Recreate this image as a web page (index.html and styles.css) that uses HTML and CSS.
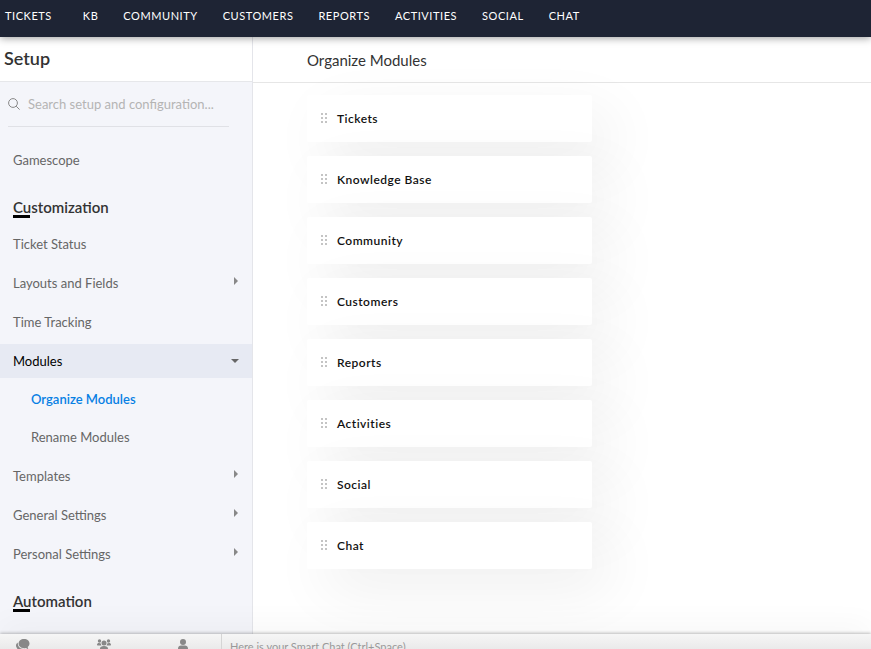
FILE: index.html
```html
<!DOCTYPE html>
<html lang="en">

<head>
    <meta charset="UTF-8">
    <meta name="viewport" content="width=device-width, initial-scale=1.0">
    <title>Setup</title>
    <link rel="stylesheet" href="styles.css">
</head>

<body>
    <!-- icons used more than once -->
    <svg class="defs" width="0" height="0">
        <symbol id="grip" viewBox="0 0 6 10">
            <path d="M0 0h2v2H0zM4 0h2v2H4zM0 4h2v2H0zM4 4h2v2H4zM0 8h2v2H0zM4 8h2v2H4z" />
        </symbol>
        <symbol id="arrow" viewBox="0 0 4 8">
            <path d="M0 0l4 4-4 4z" />
        </symbol>
    </svg>

    <nav class="topbar">
        <a class="first" href="#">TICKETS</a>
        <a href="#">KB</a>
        <a href="#">COMMUNITY</a>
        <a href="#">CUSTOMERS</a>
        <a href="#">REPORTS</a>
        <a href="#">ACTIVITIES</a>
        <a href="#">SOCIAL</a>
        <a href="#">CHAT</a>
    </nav>

    <div class="page">
        <!-- sidebar -->
        <aside class="sidebar">
            <h1>Setup</h1>
            <div class="menu_wrap">
                <label class="search">
                    <svg width="12" height="12" viewBox="0 0 12 12">
                        <circle cx="5" cy="5" r="4.4" />
                        <path d="M8.2 8.2l3.4 3.4" />
                    </svg>
                    <input type="text" aria-label="Search setup" placeholder="Search setup and configuration...">
                </label>
                <a class="item portal" href="#">Gamescope</a>

                <h2>Customization</h2>
                <ul class="menu">
                    <li><a class="item" href="#">Ticket Status</a></li>
                    <li><a class="item" href="#">Layouts and Fields <svg class="arrow"><use href="#arrow" /></svg></a></li>
                    <li><a class="item" href="#">Time Tracking</a></li>
                    <li>
                        <a class="item open" href="#">Modules
                            <svg class="arrow_down" viewBox="0 0 8 4"><path d="M0 0h8l-4 4z" /></svg>
                        </a>
                        <ul class="submenu">
                            <li><a class="item active" href="#">Organize Modules</a></li>
                            <li><a class="item" href="#">Rename Modules</a></li>
                        </ul>
                    </li>
                    <li><a class="item" href="#">Templates <svg class="arrow"><use href="#arrow" /></svg></a></li>
                    <li><a class="item" href="#">General Settings <svg class="arrow"><use href="#arrow" /></svg></a></li>
                    <li><a class="item" href="#">Personal Settings <svg class="arrow"><use href="#arrow" /></svg></a></li>
                </ul>

                <h2>Automation</h2>
            </div>
        </aside>

        <!-- content -->
        <main class="content">
            <h2 class="title">Organize Modules</h2>
            <ul class="modules">
                <li><svg class="grip"><use href="#grip" /></svg>Tickets</li>
                <li><svg class="grip"><use href="#grip" /></svg>Knowledge Base</li>
                <li><svg class="grip"><use href="#grip" /></svg>Community</li>
                <li><svg class="grip"><use href="#grip" /></svg>Customers</li>
                <li><svg class="grip"><use href="#grip" /></svg>Reports</li>
                <li><svg class="grip"><use href="#grip" /></svg>Activities</li>
                <li><svg class="grip"><use href="#grip" /></svg>Social</li>
                <li><svg class="grip"><use href="#grip" /></svg>Chat</li>
            </ul>
        </main>
    </div>

    <!-- chat bar -->
    <footer class="chatbar">
        <div class="chat_tabs">
            <button type="button" aria-label="Chats">
                <svg width="14" height="12" viewBox="0 0 14 12">
                    <path d="M8 0c3.3 0 5.500 2 5.500 4.600 0 1.500-.7 2.700-1.800 3.500l.6 2.100-2.400-1.200C6 9.800 2.600 8 2.600 4.600 2.600 2 4.800 0 8 0z" />
                    <path d="M1.800 3.500C.7 4.300 0 5.300 0 6.600c0 1.100.5 2 1.300 2.700L.8 11.500l2.500-1.200c1.400.3 2.800.2 3.900-.3C4 9.700 1.600 7.500 1.800 3.500z" />
                </svg>
            </button>
            <button type="button" aria-label="Channels">
                <svg width="14" height="12" viewBox="0 0 14 12">
                    <circle cx="2.5" cy="2" r="1.7" />
                    <circle cx="11.5" cy="2" r="1.7" />
                    <circle cx="7" cy="4" r="2.5" />
                    <path d="M0 6c0-1.500.8-2 2-2 .8 0 1.500.3 2 .8C4 5.500 4 6 4.400 6.600H.5zM14 6c0-1.500-.8-2-2-2-.8 0-1.500.3-2 .8 0 .7 0 1.200-.4 1.800h3.900zM2.800 11c0-2.700 1.200-3.900 4.200-3.900s4.200 1.200 4.200 3.900z" />
                </svg>
            </button>
            <button type="button" aria-label="Contacts">
                <svg width="12" height="12" viewBox="0 0 12 12">
                    <circle cx="6" cy="3" r="3" />
                    <path d="M1 12V9.500C1 7.500 2.500 6.500 4 6.500h4c1.500 0 3 1 3 3V12z" />
                </svg>
            </button>
        </div>
        <input type="text" aria-label="Smart Chat" placeholder="Here is your Smart Chat (Ctrl+Space)">
    </footer>
</body>

</html>
```
FILE: styles.css
```css
* {
    box-sizing: border-box;
}

body {
    margin: 0;
    height: 100vh;
    display: flex;
    flex-direction: column;
    overflow: hidden;
    font-family: Lato, "Liberation Sans", sans-serif;
    font-size: 13px;
    color: #666;
    background: #fff;
}

a {
    color: inherit;
    text-decoration: none;
}

ul {
    list-style: none;
    margin: 0;
    padding: 0;
}

h1,
h2 {
    margin: 0;
    color: #333;
}

input,
button {
    border: 0;
    padding: 0;
    background: none;
    font-family: inherit;
}

.defs {
    position: absolute;
}

/* top navigation */
.topbar {
    flex: none;
    display: flex;
    gap: 25px;
    height: 37px;
    padding: 0 5px;
    line-height: 32px;
    font-size: 11px;
    letter-spacing: 0.05em;
    color: #fff;
    background: #1e2434;
    box-shadow: 0 1px 8px rgba(0, 0, 0, 0.4);
    z-index: 1;
}

.topbar .first {
    margin-right: 6px;
}

.page {
    flex: 1;
    display: flex;
    min-height: 0;
}

/* sidebar */
.sidebar {
    flex: none;
    width: 253px;
    border-right: 1px solid #e4e5ea;
    background: #f4f5fa;
    overflow: hidden;
}

.sidebar h1 {
    height: 45px;
    padding-left: 4px;
    border-bottom: 1px solid #e6e7ea;
    line-height: 43px;
    font-size: 18px;
    font-weight: 600;
    background: #fff;
}

.search {
    display: flex;
    align-items: center;
    gap: 8px;
    height: 45px;
    margin: 0 23px 16px 8px;
    border-bottom: 1px solid #e0e1e6;
}

.search svg {
    fill: none;
    stroke: #888;
}

.search input {
    flex: 1;
    min-width: 0;
    font-size: 13px;
}

.search input::placeholder {
    color: #b4b4b4;
}

.item {
    display: flex;
    align-items: center;
    justify-content: space-between;
    height: 34px;
    padding: 0 13px;
}

.sidebar h2 {
    position: relative;
    margin: 19px 13px 9px;
    line-height: 22px;
    font-size: 15px;
    font-weight: 600;
}

.sidebar h2::after {
    content: "";
    position: absolute;
    left: 0;
    bottom: 0;
    width: 17px;
    height: 3px;
    background: #000;
}

.menu {
    display: grid;
    gap: 5px;
}

.submenu {
    display: grid;
    gap: 4px;
    padding-top: 4px;
}

.submenu .item {
    padding-left: 31px;
}

.open {
    color: #000;
    background: #e7eaf3;
}

.active {
    font-weight: 600;
    color: #0780e4;
}

.arrow {
    width: 4px;
    height: 8px;
    margin: 0 1px 4px;
    fill: #888;
}

.arrow_down {
    width: 8px;
    height: 4px;
    fill: #666;
}

/* content */
.content {
    flex: 1;
    min-width: 0;
    overflow: hidden;
}

.title {
    height: 46px;
    padding-left: 54px;
    border-bottom: 1px solid #e6e6e6;
    line-height: 46px;
    font-size: 15px;
    font-weight: 400;
}

.modules {
    display: grid;
    gap: 14px;
    max-width: 285px;
    margin: 12px 0 0 54px;
}

.modules li {
    display: flex;
    align-items: center;
    gap: 10px;
    height: 47px;
    padding: 0 14px;
    border-radius: 2px;
    font-size: 12px;
    font-weight: 600;
    letter-spacing: 0.04em;
    color: #111;
    background: #fff;
    box-shadow: 18px 20px 60px rgba(0, 0, 0, 0.07);
}

.grip {
    width: 6px;
    height: 10px;
    margin-bottom: 2px;
    fill: #c4c4c4;
}

/* chat bar */
.chatbar {
    flex: none;
    display: flex;
    align-items: flex-start;
    height: 15px;
    overflow: hidden;
    background: linear-gradient(#f6f6f6, #eaeaea);
    box-shadow: 0 -1px 3px rgba(0, 0, 0, 0.25), 0 -6px 30px rgba(0, 0, 0, 0.06);
    z-index: 1;
}

.chat_tabs {
    flex: none;
    display: flex;
    justify-content: space-between;
    width: 222px;
    height: 26px;
    padding: 5px 32px 0 16px;
    border-right: 1px solid #d5d5d5;
}

.chat_tabs button {
    height: 12px;
}

.chat_tabs svg {
    display: block;
    fill: #888;
}

.chatbar input {
    flex: 1;
    height: 24px;
    padding-left: 8px;
    font-size: 11px;
}

.chatbar input::placeholder {
    color: #999;
}
```
